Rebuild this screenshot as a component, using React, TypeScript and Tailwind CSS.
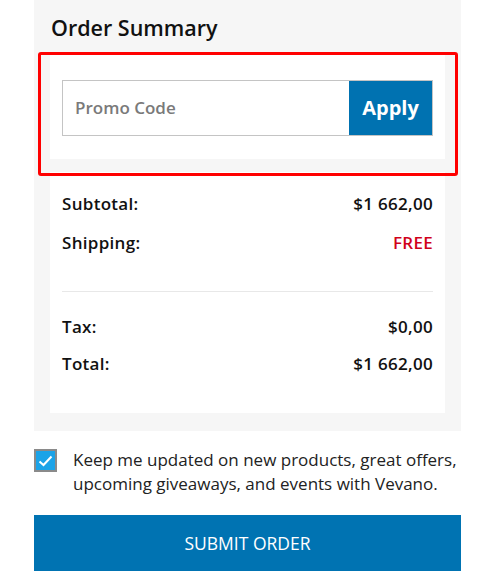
import React from 'react';

const rows = [
  { label: 'Subtotal:', value: '$1 662,00' },
  { label: 'Shipping:', value: 'FREE', red: true },
];

export default function App() {
  return (
    <div className="w-[501px] h-[581px] bg-white overflow-hidden" style={{ fontFamily: '"Open Sans", "Liberation Sans", sans-serif' }}>
      <div className="ml-[34px] w-[427px]">
        <div className="relative bg-[#f6f6f6] px-4 pt-[13px] pb-[18px]">
          <h2 className="ml-px text-[21.5px] leading-[30px] font-semibold text-[#111]">Order Summary</h2>

          <div className="mt-[12px] bg-white px-3 pt-[25px] pb-[23px]">
            <div className="flex h-[56px] border border-[#c4c4c4]">
              <input
                type="text"
                placeholder="Promo Code"
                className="flex-1 min-w-0 px-3 text-[17px] font-semibold text-[#333] placeholder-[#7a7a7a] outline-none"
              />
              <button className="w-[83px] bg-[#0072b1] text-white text-[20px] font-bold">Apply</button>
            </div>
          </div>

          <div className="absolute left-[4px] top-[52px] w-[420px] h-[124px] border-[3px] border-[#ff0000] rounded-[3px] pointer-events-none" />

          <div className="mt-[13px] bg-white px-3 pt-[20px] pb-[37px] text-[17px] tracking-[0.3px] font-semibold text-[#111]">
            {rows.map((r, i) => (
              <div key={r.label} className={`flex justify-between h-[24px] items-center ${i > 0 ? 'mt-[15px]' : ''}`}>
                <span>{r.label}</span>
                <span className={r.red ? 'text-[#d0021b]' : ''}>{r.value}</span>
              </div>
            ))}
            <div className="mt-[36px] mb-[23px] h-px bg-[#e8e8e8]" />
            <div className="flex justify-between h-[24px] items-center">
              <span>Tax:</span>
              <span>$0,00</span>
            </div>
            <div className="flex justify-between h-[24px] items-center mt-[13px]">
              <span>Total:</span>
              <span>$1 662,00</span>
            </div>
          </div>
        </div>

        <label className="mt-[17px] flex items-start">
          <span className="mt-px flex h-[23px] w-[23px] shrink-0 items-center justify-center bg-[#1ba3e8] border-2 border-[#8a8a8a]">
            <svg width="15" height="12" viewBox="0 0 15 12" fill="none">
              <path d="M1.5 6.5l4 3.5 8-8.5" stroke="white" strokeWidth="2" />
            </svg>
          </span>
          <span className="ml-[16px] text-[17px] leading-[24px] text-[#222]">
            Keep me updated on new products, great offers, upcoming giveaways, and events with Vevano.
          </span>
        </label>

        <button className="mt-[19px] w-full h-[56px] bg-[#0073b2] text-white text-[17.5px]">SUBMIT ORDER</button>
      </div>
    </div>
  );
}
